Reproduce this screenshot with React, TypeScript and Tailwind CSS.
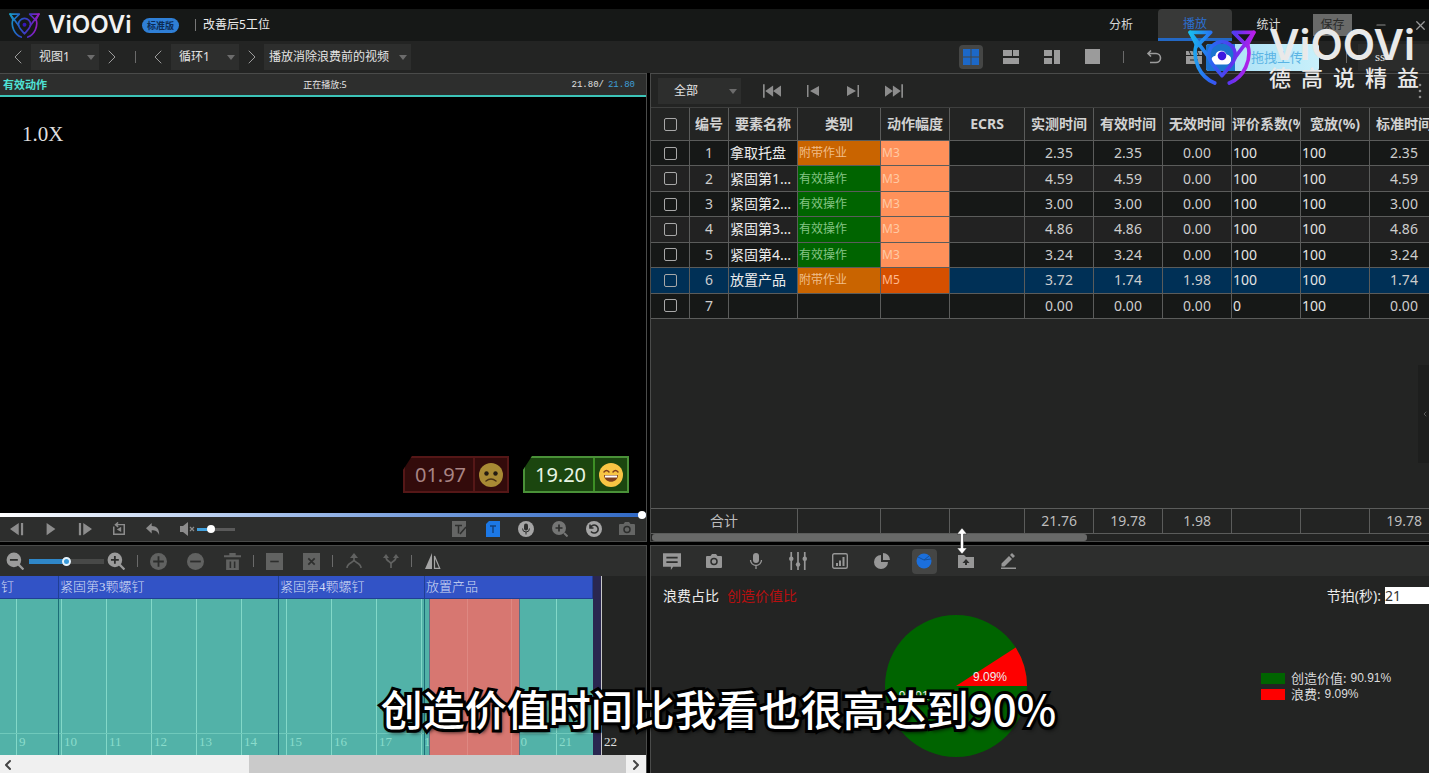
import { useState } from "react";
import type { ReactNode } from "react";
import { ChevronLeft, ChevronRight, Minus, X } from "lucide-react";

const ROWS = [
  { id: 1, name: "拿取托盘", kind: "附带作业", range: "M3", times: ["2.35", "2.35", "0.00"], rate: "100", allow: "100", std: "2.35" },
  { id: 2, name: "紧固第1颗螺钉", kind: "有效操作", range: "M3", times: ["4.59", "4.59", "0.00"], rate: "100", allow: "100", std: "4.59" },
  { id: 3, name: "紧固第2颗螺钉", kind: "有效操作", range: "M3", times: ["3.00", "3.00", "0.00"], rate: "100", allow: "100", std: "3.00" },
  { id: 4, name: "紧固第3颗螺钉", kind: "有效操作", range: "M3", times: ["4.86", "4.86", "0.00"], rate: "100", allow: "100", std: "4.86" },
  { id: 5, name: "紧固第4颗螺钉", kind: "有效操作", range: "M3", times: ["3.24", "3.24", "0.00"], rate: "100", allow: "100", std: "3.24" },
  { id: 6, name: "放置产品", kind: "附带作业", range: "M5", times: ["3.72", "1.74", "1.98"], rate: "100", allow: "100", std: "1.74" },
  { id: 7, name: "", kind: "", range: "", times: ["0.00", "0.00", "0.00"], rate: "0", allow: "100", std: "0.00" },
];

const HEADS = ["编号", "要素名称", "类别", "动作幅度", "ECRS", "实测时间", "有效时间", "无效时间", "评价系数(%)", "宽放(%)", "标准时间"];

const KIND_STYLE: Record<string, string> = {
  附带作业: "bg-[#c96400] text-[#f0bd88]",
  有效操作: "bg-[#006400] text-[#86c486]",
};
const RANGE_STYLE: Record<string, string> = {
  M3: "bg-[#ff915a] text-[#ffc9a4]",
  M5: "bg-[#d65000] text-[#ffb98e]",
};

// timeline scale
const SECOND = 45;
const ORIGIN = 8.64;
const at = (s: number) => Math.round((s - ORIGIN) * SECOND);
const TICKS = [9, 10, 11, 12, 13, 14, 15, 16, 17, 18, 19, 20, 21];
const SEGMENTS = [
  { label: "钉", from: 8.64, to: 9.96 },
  { label: "紧固第3颗螺钉", from: 9.96, to: 14.84 },
  { label: "紧固第4颗螺钉", from: 14.84, to: 18.08 },
  { label: "放置产品", from: 18.08, to: 21.82 },
];

function BrandMark({ id, className }: { id: string; className: string }) {
  return (
    <svg viewBox="0 0 204 166" className={className} fill="none" strokeWidth="11" strokeLinejoin="round" strokeLinecap="round" aria-hidden="true">
      <defs>
        <linearGradient id={id} x1="0" y1="0" x2="204" y2="30" gradientUnits="userSpaceOnUse">
          <stop offset="0" stopColor="#17c4ee" />
          <stop offset="0.4" stopColor="#2a66f2" />
          <stop offset="0.7" stopColor="#5a35f0" />
          <stop offset="1" stopColor="#c81ae8" />
        </linearGradient>
      </defs>
      <g stroke={`url(#${id})`}>
        <path d="M24 46C12 88 34 142 80 160" />
        <path d="M180 46c12 42-10 96-56 114" />
        <path d="M6 7h62L27 48ZM198 7h-62l41 41Z" />
        <path d="M6 7l58 78M198 7l-58 78" />
        <path d="M102 138C82 112 62 98 62 76a40 40 0 0 1 80 0c0 22-20 36-40 62Z" />
      </g>
      <circle cx="102" cy="78" r="13" fill="#3d18e0" />
    </svg>
  );
}

function Icon({ children, size = "size-4" }: { children: ReactNode; size?: string }) {
  return (
    <svg viewBox="0 0 16 16" className={size} fill="currentColor" aria-hidden="true">
      {children}
    </svg>
  );
}

function Tool({ label, width, children, className = "" }: { label: string; width: string; children: ReactNode; className?: string }) {
  return (
    <button aria-label={label} className={`flex h-full shrink-0 items-center justify-center ${width} ${className}`}>
      {children}
    </button>
  );
}

function Picker({ label, value, className, pad = "pl-2" }: { label: string; value: string; className: string; pad?: string }) {
  return (
    <div className={`relative h-[26px] shrink-0 bg-[#2d2e2d] ${className}`}>
      <select aria-label={label} className={`block h-full w-full appearance-none bg-transparent text-[12px] text-[#e4e4e4] outline-none ${pad}`}>
        <option>{value}</option>
      </select>
      <svg viewBox="0 0 8 5" className="pointer-events-none absolute right-1 top-[11px] h-[5px] w-2" aria-hidden="true">
        <path d="M0 0h8L4 5Z" fill="#6c6c6c" />
      </svg>
    </div>
  );
}

function Divider({ width }: { width: string }) {
  return (
    <div className={`flex shrink-0 justify-center ${width}`}>
      <div className="h-3 w-px bg-[#6a6a6a]" />
    </div>
  );
}

function Header() {
  return (
    <header className="flex h-8 items-center bg-[#161817] pl-[9px]">
      <BrandMark id="brand-small" className="h-[25px] w-[31px] opacity-80" />
      <h1 className="ml-2 w-[86px] font-['Inter',sans-serif] text-[24px] leading-8 font-semibold text-[#f2f2f2]">ViOOVi</h1>
      <span className="ml-2 rounded-full bg-[#2f7fd6] px-[5px] text-[9px] leading-[15px] font-bold text-[#0d2c55]">标准版</span>
      <div className="ml-4 h-3 w-px bg-[#777]" />
      <span className="ml-[7px] text-[12px] text-[#ececec]">改善后5工位</span>
      <nav className="ml-auto flex h-full text-[12px] text-[#d8d8d8]">
        <a href="#analysis" className="flex w-[74px] items-center justify-center">分析</a>
        <a href="#play" className="flex w-[74px] items-center justify-center rounded-t-[4px] border-b-[3px] border-[#2368c4] bg-[#383938] text-[#2b6fd0]">播放</a>
        <a href="#stats" className="flex w-[73px] items-center justify-center">统计</a>
      </nav>
      <button className="ml-2 h-[22px] w-[39px] bg-[#696a69] text-[12px] text-[#292a29]">保存</button>
      <button aria-label="最小化" className="flex w-[58px] justify-center text-[#8a8a8a]"><Minus size={14} strokeWidth={2} /></button>
      <button aria-label="关闭" className="flex w-[19px] justify-end pr-px text-[#9a9a9a]"><X size={15} strokeWidth={2} /></button>
    </header>
  );
}

function Toolbar() {
  return (
    <div className="flex h-8 items-center bg-[#232423] pl-[5px] text-[#9b9b9b]">
      <Tool label="上一视图" width="w-[26px]"><ChevronLeft size={24} strokeWidth={1} /></Tool>
      <Picker label="视图" value="视图1" className="w-[68px]" />
      <Tool label="下一视图" width="w-[26px]"><ChevronRight size={24} strokeWidth={1} /></Tool>
      <Divider width="w-5" />
      <Tool label="上一循环" width="w-[26px]"><ChevronLeft size={24} strokeWidth={1} /></Tool>
      <Picker label="循环" value="循环1" className="w-[68px]" />
      <Tool label="下一循环" width="w-[25px]"><ChevronRight size={24} strokeWidth={1} /></Tool>
      <Picker label="播放内容" value="播放消除浪费前的视频" className="w-[147px]" pad="pl-[5px]" />
      <div className="ml-auto flex h-full items-center">
        <Tool label="四宫格" width="w-[41px]">
          <span className="flex size-6 items-center justify-center rounded-[4px] bg-[#454645] text-[#1c68c8]">
            <Icon><path d="M0 0h7.5v7.5H0zM8.5 0H16v7.5H8.5zM0 8.500h7.500V16H0zM8.500 8.500H16V16H8.500z" /></Icon>
          </span>
        </Tool>
        <Tool label="上二下一" width="w-[40px]"><Icon><path d="M0 1h9v6H0zM10 1h6v6h-6zM0 9h16v6H0z" /></Icon></Tool>
        <Tool label="左二右一" width="w-[41px]"><Icon><path d="M0 1h8v6H0zM0 9h8v6H0zM10 1h6v14h-6z" /></Icon></Tool>
        <Tool label="单窗口" width="w-[41px]"><Icon><path d="M0 0h15v15H0z" /></Icon></Tool>
        <Divider width="w-5" />
        <Tool label="撤销" width="w-[41px]">
          <Icon><path d="M5 1.500 2 4.500l3 3M2.500 4.500H10a4.500 4.500 0 0 1 0 9H4" fill="none" stroke="currentColor" strokeWidth="1.600" /></Icon>
        </Tool>
        <Tool label="视频列表" width="w-[32px]" className="pl-2">
          <Icon><path d="M0 2h16v4H0zM0 7h16v8H0z" /><path d="m3 2 2 4M7 2l2 4M11 2l2 4M4 11h8" stroke="#232423" /></Icon>
        </Tool>
        <button className="flex h-[27px] w-[113px] items-center overflow-hidden rounded-[3px] bg-linear-to-r from-[#a6def5] to-[#c8f0fb] text-[13px] text-[#5bb4e4]">
          <span className="flex h-full w-[29px] items-center justify-center bg-[#1c74cf] text-white">
            <Icon size="size-5"><path d="M4 14a3.500 3.500 0 0 1-.5-7A4.600 4.600 0 0 1 12.400 6 4 4 0 0 1 12 14Z" /></Icon>
          </span>
          <span className="pl-4">拖拽上传</span>
        </button>
        <div className="w-[22px]" />
        <Divider width="w-[10px]" />
        <button aria-label="搜索 ss" className="ml-[7px] h-[27px] w-[71px] bg-[#2b2c2b] pr-[44px] text-right font-['Liberation_Serif',serif] text-[13px] text-[#e8e8e8]">ss</button>
      </div>
    </div>
  );
}

function Score({ value, good }: { value: string; good?: boolean }) {
  return (
    <div
      className={`flex h-[37px] w-[106px] border-2 [clip-path:polygon(9px_0,100%_0,100%_100%,0_100%,0_14px)] ${
        good ? "border-[#4a9138] bg-[#1b460f] text-[#e8f5e4]" : "border-[#551717] bg-[#330b0b] text-[#a88484]"
      }`}
    >
      <span className="flex-1 pl-[3px] text-center text-[20px] leading-[34px]">{value}</span>
      <span className={`flex w-[34px] items-center justify-center border-l-2 ${good ? "border-[#3d8f25]" : "border-[#551717]"}`}>
        <svg viewBox="0 0 24 24" className="size-6" fill="none" strokeLinecap="round" aria-hidden="true">
          <circle cx="12" cy="12" r="12" fill={good ? "#f8c544" : "#a88a34"} />
          {good ? (
            <g>
              <path d="M5 9q2.500-3 5 0M14 9q2.500-3 5 0" stroke="#80401c" strokeWidth="1.500" />
              <path d="M5 12h14c0 9-14 9-14 0Z" fill="#80401c" />
              <path d="M6 12.500h12v2H6Z" fill="#fff" />
            </g>
          ) : (
            <g>
              <circle cx="7.500" cy="10.500" r="2.200" fill="#231b12" />
              <circle cx="16.500" cy="10.500" r="2.200" fill="#231b12" />
              <path d="M7 18q5-4 10 0" stroke="#4a3214" strokeWidth="1.500" />
            </g>
          )}
        </svg>
      </span>
    </div>
  );
}

function PlayerPanel() {
  return (
    <section className="flex flex-col border-t border-r border-b border-[#4a4b4a] bg-black">
      <div className="grid h-[23px] grid-cols-3 items-center border-b-2 border-[#3cc4b8] bg-[#2d2e2d] px-[3px]">
        <span className="text-[11px] leading-4 font-bold text-[#4fe3d6]">有效动作</span>
        <span className="pl-1 text-center text-[9px] leading-4 text-[#e6e6e6]">正在播放:5</span>
        <span className="pr-2 text-right font-['Liberation_Mono',monospace] text-[9px] leading-4 text-[#e0e0e0]">
          21.80/<span className="ml-1 text-[#3f9fd8]">21.80</span>
        </span>
      </div>
      <div className="flex min-h-[416px] flex-1 flex-col px-[22px] pt-[23px] pb-5">
        <p className="font-['Liberation_Serif',serif] text-[21px] leading-7 text-[#dedede]">1.0X</p>
        <div className="mt-auto mr-[-5px] flex justify-end gap-[14px]">
          <Score value="01.97" />
          <Score value="19.20" good />
        </div>
      </div>
      <input
        type="range"
        aria-label="播放进度"
        defaultValue={100}
        className="relative h-1 w-full appearance-none bg-linear-to-r from-white to-[#2f68c4] [&::-webkit-slider-thumb]:size-2 [&::-webkit-slider-thumb]:appearance-none [&::-webkit-slider-thumb]:rounded-full [&::-webkit-slider-thumb]:bg-white"
      />
      <div className="flex h-6 items-center bg-[#2d2e2d] text-[#8c8c8c]">
        <Tool label="上一帧" width="w-[34px]"><Icon size="size-[14px]"><path d="M10 1v14L0 8ZM12.500 1h2.500v14h-2.500z" /></Icon></Tool>
        <Tool label="播放" width="w-[34px]"><Icon size="size-[14px]"><path d="M3 1l10 7-10 7Z" /></Icon></Tool>
        <Tool label="下一帧" width="w-[34px]"><Icon size="size-[14px]"><path d="M6 1v14l10-7ZM1 1h2.500v14H1z" /></Icon></Tool>
        <Tool label="循环播放" width="w-[34px]">
          <Icon size="size-[14px]"><path d="M2 5v9h12V3H5M7 .5 4 3l3 2.500" fill="none" stroke="currentColor" strokeWidth="1.700" /><path d="M10.500 5.500v6l-5-3z" /></Icon>
        </Tool>
        <Tool label="返回" width="w-[34px]">
          <Icon size="size-[14px]"><path d="M6.500 1v3.500C12 4.500 15.500 8 15 15 13.500 11 11 9.500 6.500 9.500V13L0 7Z" /></Icon>
        </Tool>
        <Tool label="静音" width="w-[27px]" className="pl-[6px]">
          <Icon size="size-4"><path d="M1 5h3l5-4v14l-5-4H1Z" /><path d="m11 6 4 4m0-4-4 4" stroke="currentColor" strokeWidth="1.200" /></Icon>
        </Tool>
        <input
          type="range"
          aria-label="音量"
          defaultValue={32}
          className="h-[3px] w-[38px] appearance-none bg-linear-to-r from-[#41a0dc] from-30% to-[#5a5a5a] to-30% [&::-webkit-slider-thumb]:size-2 [&::-webkit-slider-thumb]:appearance-none [&::-webkit-slider-thumb]:rounded-full [&::-webkit-slider-thumb]:bg-white"
        />
        <div className="ml-auto flex h-full items-center pr-[2px]">
          <Tool label="文字编辑" width="w-[34px]" className="text-[#656665]">
            <Icon><path d="M1 0h14v16H1z" /><path d="M4 4.500h7M7.500 4.500v8M9 13l6-7" stroke="#2d2e2d" strokeWidth="1.500" /></Icon>
          </Tool>
          <Tool label="显示文字" width="w-[33px]" className="text-[#1c78e6]">
            <Icon><path d="M1 3l3-3h11v16H1z" /><path d="M5 5h6M8 5v7" stroke="#12407c" strokeWidth="1.400" /></Icon>
          </Tool>
          <Tool label="录音" width="w-[34px]" className="text-[#a5a5a5]">
            <Icon>
              <circle cx="8" cy="8" r="8" />
              <rect x="6" y="2.500" width="4" height="7" rx="2" fill="#2d2e2d" />
              <path d="M4.500 7.500a3.500 3.500 0 0 0 7 0M8 11v2.500" fill="none" stroke="#2d2e2d" />
            </Icon>
          </Tool>
          <Tool label="放大画面" width="w-[34px]" className="text-[#747574]">
            <Icon><circle cx="7" cy="7" r="7" /><path d="m12 12 3.500 3.500" stroke="currentColor" strokeWidth="2" /><path d="M3.500 7h7M7 3.500v7" stroke="#2d2e2d" strokeWidth="1.700" /></Icon>
          </Tool>
          <Tool label="重置" width="w-[33px]" className="text-[#a5a5a5]">
            <Icon><circle cx="8" cy="8" r="8" /><path d="M4 3.500v3.500h3.500M4.500 6.500A4 4 0 1 1 5 10.500" fill="none" stroke="#2d2e2d" strokeWidth="1.600" /></Icon>
          </Tool>
          <Tool label="截图" width="w-[34px]" className="text-[#656665]">
            <Icon><path d="M1 3h3.500L6 1h4l1.500 2H15a1 1 0 0 1 1 1v10H0V4a1 1 0 0 1 1-1Z" /><circle cx="8" cy="8.500" r="3" fill="none" stroke="#2d2e2d" strokeWidth="1.500" /></Icon>
          </Tool>
        </div>
      </div>
    </section>
  );
}

function TimelinePanel() {
  return (
    <section className="flex flex-col border-t border-r border-[#4a4b4a] bg-[#232423]">
      <div className="flex h-[30px] items-center bg-[#2d2e2d] text-[#616261]">
        <Tool label="缩小" width="w-[29px]" className="text-[#9b9b9b]">
          <Icon size="size-[18px]"><circle cx="7" cy="7" r="6.500" /><path d="m11 11 4.500 4.500" stroke="currentColor" strokeWidth="2" /><path d="M3.500 7h7" stroke="#2d2e2d" strokeWidth="1.600" /></Icon>
        </Tool>
        <input
          type="range"
          aria-label="时间轴缩放"
          defaultValue={50}
          className="h-[5px] w-[75px] appearance-none bg-linear-to-r from-[#2f87c8] from-50% to-[#484948] to-50% [&::-webkit-slider-thumb]:size-[9px] [&::-webkit-slider-thumb]:appearance-none [&::-webkit-slider-thumb]:rounded-full [&::-webkit-slider-thumb]:border-2 [&::-webkit-slider-thumb]:border-[#e6f3fb] [&::-webkit-slider-thumb]:bg-[#3a9ad9]"
        />
        <Tool label="放大" width="w-[31px]" className="pr-2 text-[#9b9b9b]">
          <Icon size="size-[18px]"><circle cx="7" cy="7" r="6.500" /><path d="m11 11 4.500 4.500" stroke="currentColor" strokeWidth="2" /><path d="M3.500 7h7M7 3.500v7" stroke="#2d2e2d" strokeWidth="1.600" /></Icon>
        </Tool>
        <Divider width="w-[5px]" />
        <Tool label="添加" width="w-[37px]"><Icon size="size-[17px]"><circle cx="8" cy="8" r="8" /><path d="M3 8h10M8 3v10" stroke="#2d2e2d" strokeWidth="1.700" /></Icon></Tool>
        <Tool label="减少" width="w-[37px]"><Icon size="size-[17px]"><circle cx="8" cy="8" r="8" /><path d="M3 8h10" stroke="#2d2e2d" strokeWidth="1.700" /></Icon></Tool>
        <Tool label="删除" width="w-[37px]">
          <Icon size="size-[17px]"><path d="M5 0h6v2h5v2H0V2h5zM2 6h12v10H2z" /><path d="M6 8v6M10 8v6" stroke="#2d2e2d" strokeWidth="1.500" /></Icon>
        </Tool>
        <Divider width="w-[5px]" />
        <Tool label="移除" width="w-[37px]"><Icon size="size-[17px]"><path d="M0 0h16v16H0z" /><path d="M4 8h8" stroke="#2d2e2d" strokeWidth="1.500" /></Icon></Tool>
        <Tool label="清除" width="w-[37px]"><Icon size="size-[17px]"><path d="M0 0h16v16H0z" /><path d="m5 5 6 6m0-6-6 6" stroke="#2d2e2d" strokeWidth="1.600" /></Icon></Tool>
        <Divider width="w-[5px]" />
        <Tool label="合并" width="w-[37px]">
          <Icon><path d="M1 15C1 10 7 10 8 7c1 3 7 3 7 8M8 8V3" fill="none" stroke="currentColor" strokeWidth="1.600" /><path d="m8 0 4 5H4Z" /></Icon>
        </Tool>
        <Tool label="拆分" width="w-[37px]">
          <Icon><path d="M3 4c0 5 5 4 5 7 0-3 5-2 5-7M8 10v5" fill="none" stroke="currentColor" strokeWidth="1.700" /><path d="m3 1 3 4H0ZM13 1l3 4h-6Z" /></Icon>
        </Tool>
        <Divider width="w-[5px]" />
        <Tool label="镜像" width="w-[37px]" className="text-[#a5a5a5]">
          <Icon><path d="M7 0v16H0Z" /><path d="M9.500 3v12.300h5.200Z" fill="none" stroke="currentColor" strokeWidth="1.200" /></Icon>
        </Tool>
      </div>

      <div className="relative h-[179px] overflow-hidden">
        <div className="flex h-[23px]">
          {SEGMENTS.map((s) => (
            <div
              key={s.label}
              className="shrink-0 overflow-hidden border-r border-b border-[#203f94] bg-[#3253c6] pl-px font-['Liberation_Serif','Noto_Sans_CJK_SC',serif] text-[13px] leading-[22px] font-light whitespace-nowrap text-[#d3dcf5]"
              style={{ width: at(s.to) - at(s.from) }}
            >
              {s.label}
            </div>
          ))}
        </div>
        <div className="h-[156px] bg-[#52b2a8]" style={{ width: at(21.82) }} />
        {/* second marks */}
        {TICKS.map((t) => (
          <div key={t} className="absolute top-[23px] bottom-0 flex items-end border-l border-[#83d8c8] pb-[5px] pl-[2px]" style={{ left: at(t) }}>
            <span className="font-['Liberation_Serif',serif] text-[13px] leading-4 text-[#8adccb]">{t}</span>
          </div>
        ))}
        <div className="absolute bottom-[21px] left-0 h-px bg-[#6fc9bb]" style={{ width: at(21.82) }} />
        {SEGMENTS.slice(0, 3).map((s) => (
          <div key={s.label} className="absolute top-[23px] bottom-0 w-px bg-[#1c6d77]" style={{ left: at(s.to) - 1 }} />
        ))}
        <div className="absolute top-[23px] bottom-0 border-x border-[#5c6f86] bg-[#d77771]" style={{ left: at(18.17), width: 91 }}>
          <div className="ml-[37px] h-full w-[45px] border-x border-[#de8882]" />
        </div>
        <div className="absolute inset-y-0 w-2 bg-[#2a2750]" style={{ left: at(21.82) }} />
        <div className="absolute inset-y-0 flex items-end border-l border-[#c8c8c8] pb-[5px] pl-[2px]" style={{ left: at(22) }}>
          <span className="font-['Liberation_Serif',serif] text-[13px] leading-4 text-[#e0e0e0]">22</span>
        </div>
      </div>

      <div className="flex h-[19px] items-center bg-[#f0f0f0] text-[#444]">
        <button aria-label="向左滚动" className="w-[18px]"><ChevronLeft size={16} strokeWidth={3} /></button>
        <div className="flex h-full flex-1">
          <div className="w-[38%]" />
          <div className="flex-1 bg-[#cacaca]" />
        </div>
        <button aria-label="向右滚动" className="flex w-5 justify-center"><ChevronRight size={16} strokeWidth={3} /></button>
      </div>
    </section>
  );
}

function Columns() {
  return (
    <colgroup>
      <col className="w-[39px]" />
      <col className="w-[39px]" />
      <col className="w-[69px]" />
      <col className="w-[83px]" />
      <col className="w-[69px]" />
      <col className="w-[75px]" />
      <col className="w-[69px]" />
      <col className="w-[69px]" />
      <col className="w-[69px]" />
      <col className="w-[69px]" />
      <col className="w-[69px]" />
      <col className="w-[69px]" />
    </colgroup>
  );
}

const CELL = "border-r border-b border-[#5b5c5b] p-0 text-center";
const BOX = "block mx-auto size-[13px] appearance-none rounded-[2px] border border-[#a8a8a8] checked:bg-[#2b6fd0]";

function ElementsPanel() {
  const [selected, setSelected] = useState(6);
  return (
    <section className="flex min-w-0 flex-col overflow-hidden border-t border-b border-l border-[#4a4b4a] bg-[#232423]">
      <div className="flex h-[33px] items-center pl-[7px] text-[#8c8c8c]">
        <Picker label="筛选" value="全部" className="w-[83px]" pad="pl-4" />
        <div className="ml-[11px] flex h-full">
          <Tool label="第一个" width="w-[40px]"><Icon size="size-[18px]"><path d="M0 2h1.500v12H0zM9 3v10L2 8ZM16 3v10L9 8Z" /></Icon></Tool>
          <Tool label="上一个" width="w-[41px]"><Icon><path d="M2 2h1.500v12H2zM14 3v10L5 8Z" /></Icon></Tool>
          <Tool label="下一个" width="w-[40px]"><Icon><path d="M12.500 2H14v12h-1.500zM2 3v10l9-5Z" /></Icon></Tool>
          <Tool label="最后一个" width="w-[41px]"><Icon size="size-[18px]"><path d="M14.500 2H16v12h-1.500zM0 3v10l7-5ZM7 3v10l7-5Z" /></Icon></Tool>
        </div>
        <Tool label="更多" width="w-[18px]" className="ml-auto"><Icon><circle cx="8" cy="2" r="1.300" /><circle cx="8" cy="8" r="1.300" /><circle cx="8" cy="14" r="1.300" /></Icon></Tool>
      </div>
      <table className="h-[212px] w-[788px] table-fixed border-separate border-spacing-0 border-t border-[#3e3f3e] text-[14px] leading-5 text-[#cdcdcd]">
        <Columns />
        <thead>
          <tr className="h-[33px]">
            <th className={CELL}><input type="checkbox" aria-label="全选" className={BOX} /></th>
            {HEADS.map((h) => (
              <th key={h} className={`${CELL} overflow-hidden font-bold whitespace-nowrap text-[#d2d2d2]`}>{h}</th>
            ))}
          </tr>
        </thead>
        <tbody>
          {ROWS.map((r) => (
            <tr
              key={r.id}
              onClick={() => setSelected(r.id)}
              className={r.id === selected ? "bg-[#003056]" : "odd:bg-[#161817] even:bg-[#222222]"}
            >
              <td className={CELL}><input type="checkbox" aria-label={`选择第${r.id}行`} className={BOX} /></td>
              <td className={CELL}>{r.id}</td>
              <td className={`${CELL} truncate pl-px text-left text-[#ececec]`}>{r.name}</td>
              <td className={`${CELL} pl-px text-left text-[12px] ${KIND_STYLE[r.kind] ?? ""}`}>{r.kind}</td>
              <td className={`${CELL} pl-px text-left text-[12px] ${RANGE_STYLE[r.range] ?? ""}`}>{r.range}</td>
              <td className={CELL} />
              {r.times.map((t, i) => (
                <td key={i} className={CELL}>{t}</td>
              ))}
              <td className={`${CELL} pl-px text-left text-[#e4e4e4]`}>{r.rate}</td>
              <td className={`${CELL} pl-px text-left text-[#e4e4e4]`}>{r.allow}</td>
              <td className={CELL}>{r.std}</td>
            </tr>
          ))}
        </tbody>
      </table>
      <div className="flex-1" />
      <table className="w-[788px] table-fixed border-separate border-spacing-0 border-t border-[#5b5c5b] text-[14px] leading-5 text-[#bdbdbd]">
        <Columns />
        <tbody>
          <tr className="h-[25px]">
            <td className={CELL} colSpan={3}>合计</td>
            <td className={CELL} />
            <td className={CELL} />
            <td className={CELL} />
            <td className={CELL}>21.76</td>
            <td className={CELL}>19.78</td>
            <td className={CELL}>1.98</td>
            <td className={CELL} />
            <td className={CELL} />
            <td className={CELL}>19.78</td>
          </tr>
        </tbody>
      </table>
      <div className="h-[7px] pl-px">
        <div className="h-full w-[56%] rounded-[3px] bg-[#686968]" />
      </div>
    </section>
  );
}

function PieChart() {
  return (
    <svg viewBox="0 0 142 142" className="size-[142px]" role="img" aria-label="创造价值比">
      <circle cx="71" cy="71" r="71" fill="#006400" />
      <path d="M71 71h71A71 71 0 0 0 130.700 32.600Z" fill="#fe0000" />
      <g fill="#eee" fontSize="12" fontFamily="'Liberation Sans', Arial, sans-serif" textAnchor="middle">
        <text x="105" y="66">9.09%</text>
        <text x="34" y="85">90.91%</text>
      </g>
    </svg>
  );
}

function AnalysisPanel() {
  return (
    <section className="flex min-w-0 flex-col border-t border-b border-l border-[#4a4b4a] bg-[#232423]">
      <div className="flex h-[30px] items-center bg-[#2d2e2d] text-[#979797]">
        <Tool label="备注" width="w-[42px]">
          <Icon size="size-[18px]"><path d="M0 1h16v12H9l-2 3v-3H0z" /><path d="M3 5h10M3 9h10" stroke="#2d2e2d" strokeWidth="1.400" /></Icon>
        </Tool>
        <Tool label="拍照" width="w-[42px]">
          <Icon><path d="M1 3h3.500L6 1h4l1.500 2H15a1 1 0 0 1 1 1v10a1 1 0 0 1-1 1H1a1 1 0 0 1-1-1V4a1 1 0 0 1 1-1Z" /><circle cx="8" cy="8.500" r="3" fill="none" stroke="#2d2e2d" strokeWidth="1.500" /></Icon>
        </Tool>
        <Tool label="语音" width="w-[42px]">
          <Icon><rect x="5" y="0" width="6" height="10" rx="3" /><path d="M2.500 7a5.500 5.500 0 0 0 11 0M8 12.500V16" fill="none" stroke="currentColor" strokeWidth="1.300" /></Icon>
        </Tool>
        <Tool label="调节" width="w-[42px]">
          <Icon size="size-[18px]"><path d="M2 0v16M8 0v16M14 0v16" stroke="currentColor" strokeWidth="1.500" /><circle cx="2" cy="6" r="2" /><circle cx="8" cy="11" r="2" /><circle cx="14" cy="6" r="2" /></Icon>
        </Tool>
        <Tool label="柱状图" width="w-[42px]">
          <Icon><rect x="0.700" y="0.700" width="14.600" height="14.600" rx="1.500" fill="none" stroke="currentColor" strokeWidth="1.400" /><path d="M4 10h2v3H4zM7 7.500h2V13H7zM10.500 4h2v9h-2z" /></Icon>
        </Tool>
        <Tool label="饼图" width="w-[42px]">
          <Icon><path d="M7 2v7h7A7 7 0 1 1 7 2Z" /><path d="M9 0a7 7 0 0 1 7 7H9Z" /></Icon>
        </Tool>
        <Tool label="价值比" width="w-[42px]">
          <span className="flex size-[25px] items-center justify-center rounded-[4px] bg-[#454645] text-[#1b6fdc]">
            <Icon><circle cx="8" cy="8" r="7.500" /><path d="m2 4 6 3 5-4M8 7l7-1" fill="none" stroke="#14509c" /></Icon>
          </span>
        </Tool>
        <Tool label="导出" width="w-[42px]">
          <Icon><path d="M0 2h6l2 2h8v11H0z" /><path d="m8 6 3.500 4h-7ZM7 9h2v3H7z" fill="#2d2e2d" /></Icon>
        </Tool>
        <Tool label="编辑" width="w-[42px]">
          <Icon><path d="M1.500 10.500 9 3l3 3-7.500 7.500h-3zM10 2l2-2 3 3-2 2zM1 14.500h15V16H1z" /></Icon>
        </Tool>
      </div>
      <div className="flex h-[39px] items-center pl-3 text-[14px] text-[#ececec]">
        <button className="text-[14px]">浪费占比</button>
        <button className="ml-2 text-[14px] text-[#b80f0f]">创造价值比</button>
        <label htmlFor="takt" className="ml-auto">节拍(秒):</label>
        <input id="takt" defaultValue="21" className="ml-1 h-[17px] w-11 bg-white text-[14px] leading-4 text-[#333] outline-none" />
      </div>
      <div className="grid grid-cols-[610fr_168fr] items-center pb-4">
        <div className="flex justify-center"><PieChart /></div>
        <ul className="text-[13px] leading-4 text-[#dcdcdc]">
          <li className="flex items-center gap-[6px]"><span className="h-[11px] w-6 bg-[#006400]" />创造价值: <span className="-ml-[2px] font-['Liberation_Sans',sans-serif] text-[12px]">90.91%</span></li>
          <li className="flex items-center gap-[6px]"><span className="h-[11px] w-6 bg-[#fe0000]" />浪费: <span className="-ml-[2px] font-['Liberation_Sans',sans-serif] text-[12px]">9.09%</span></li>
        </ul>
      </div>
    </section>
  );
}

export default function App() {
  return (
    <div className="relative flex min-h-screen flex-col overflow-hidden bg-black pt-[9px] font-['Noto_Sans','Noto_Sans_CJK_SC',sans-serif] leading-5">
      <Header />
      <Toolbar />
      <main className="grid flex-1 grid-cols-[647fr_779fr] grid-rows-[1fr_auto] gap-[3px]">
        <PlayerPanel />
        <ElementsPanel />
        <TimelinePanel />
        <AnalysisPanel />
      </main>

      {/* side drawer handle */}
      <button aria-label="展开侧栏" className="absolute top-[365px] right-0 flex h-[98px] w-[11px] items-center justify-end bg-[#1d1e1d] text-[#777]">
        <ChevronLeft size={8} strokeWidth={2} />
      </button>

      {/* watermark */}
      <div className="pointer-events-none absolute top-[30px] right-[10px] flex gap-[13px]">
        <BrandMark id="brand-large" className="h-[55px] w-[68px]" />
        <div className="w-[150px] text-[#e9e9e9]">
          <p className="font-['Inter',sans-serif] text-[42px] leading-[30px] font-semibold">ViOOVi</p>
          <p className="flex justify-between font-['Noto_Sans_CJK_SC',sans-serif] text-[22px] leading-8 font-medium">
            {[..."德高说精益"].map((c) => (
              <span key={c}>{c}</span>
            ))}
          </p>
        </div>
      </div>

      {/* resize cursor between the right-hand panels */}
      <svg viewBox="0 0 12 26" className="pointer-events-none absolute top-[528px] left-[956px] h-[26px] w-3" aria-hidden="true">
        <path d="M6 0l5 6H7.500v14H11l-5 6-5-6h3.500V6H1Z" fill="#fff" stroke="#222" strokeWidth="0.500" />
      </svg>

      {/* subtitle */}
      <p className="pointer-events-none absolute inset-x-0 bottom-9 pl-2 text-center font-['Noto_Sans_CJK_SC',sans-serif] text-[42px] leading-[60px] font-medium text-white [paint-order:stroke_fill] [-webkit-text-stroke:6px_black] [text-shadow:2px_3px_4px_black]">
        创造价值时间比我看也很高达到90%
      </p>
    </div>
  );
}
